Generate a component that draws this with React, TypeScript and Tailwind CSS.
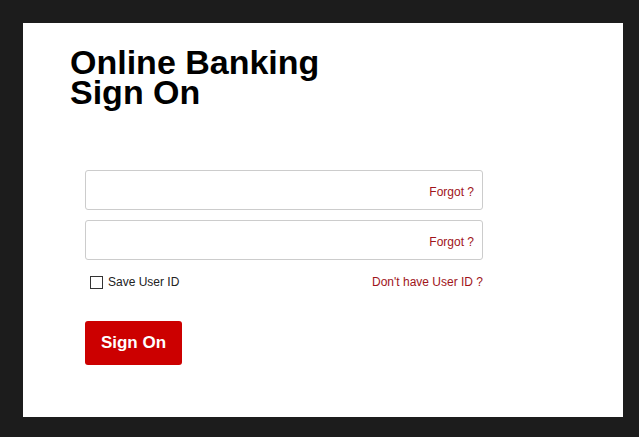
import { useState } from "react";

function Field({ type }: { type: string }) {
  return (
    <div className="flex h-[40px] items-center rounded-[3px] border border-[#cccccc] bg-white pr-[8px]">
      <input
        type={type}
        className="h-full min-w-0 flex-1 bg-transparent px-[10px] text-[13px] outline-none"
      />
      <a href="#" className="pt-[3px] text-[12px] text-[#a0141a]">
        Forgot ?
      </a>
    </div>
  );
}

export default function App() {
  const [save, setSave] = useState(false);

  return (
    <div
      className="flex h-[437px] w-[639px] items-start bg-[#1c1c1c] pl-[23px] pt-[23px]"
      style={{ fontFamily: '"Liberation Sans", Arial, sans-serif' }}
    >
      <div className="h-[394px] w-[600px] bg-white pl-[47px] pt-[24px]">
        <h1 className="text-[34px] font-bold leading-[30px] text-black">
          Online Banking
          <br />
          Sign On
        </h1>

        {/* Sign-on form */}
        <form
          className="ml-[15px] mt-[63px] flex w-[398px] flex-col"
          onSubmit={(e) => e.preventDefault()}
        >
          <div className="flex flex-col gap-[10px]">
            <Field type="text" />
            <Field type="password" />
          </div>

          <div className="mt-[13px] flex items-center justify-between text-[12px]">
            <label className="flex items-center gap-[5px] pl-[5px] text-[#222222]">
              <span
                onClick={() => setSave(!save)}
                className="flex h-[13px] w-[13px] items-center justify-center border border-[#333333] bg-white text-[10px] leading-none"
              >
                {save ? "✓" : ""}
              </span>
              Save User ID
            </label>
            <a href="#" className="text-[#a0141a]">
              Don't have User ID ?
            </a>
          </div>

          <button
            type="submit"
            className="mt-[30px] h-[44px] w-[97px] rounded-[3px] bg-[#cc0000] text-[17px] font-bold text-white"
          >
            Sign On
          </button>
        </form>
      </div>
    </div>
  );
}
